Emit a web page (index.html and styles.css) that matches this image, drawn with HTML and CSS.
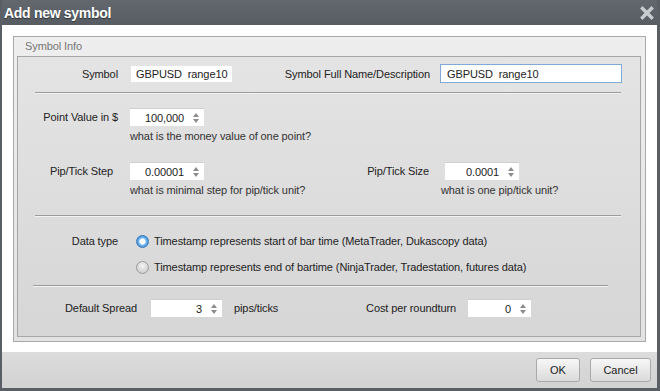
FILE: index.html
```html
<!DOCTYPE html>
<html lang="en">
<head>
    <meta charset="UTF-8">
    <title>Add new symbol</title>
    <link rel="stylesheet" href="styles.css">
</head>
<body>
    <div class="dialog">
        <div class="titlebar">
            <span class="title">Add new symbol</span>
            <svg class="close" width="14" height="14" viewBox="0 0 14 14">
                <path d="M2.5 2.5 L11.5 11.5 M11.5 2.5 L2.5 11.5" stroke="#c9ccce" stroke-width="3.4" stroke-linecap="square"/>
            </svg>
        </div>
        <div class="content">
            <div class="group">
                <div class="legend">Symbol Info</div>
                <div class="panel">
                    <div class="row first">
                        <span class="lbl w100">Symbol</span>
                        <input class="text short" type="text" value="GBPUSD  range10">
                        <span class="lbl w197">Symbol Full Name/Description</span>
                        <input class="text long" type="text" value="GBPUSD  range10">
                    </div>

                    <div class="sep"></div>

                    <div class="row point">
                        <span class="lbl w100">Point Value in $</span>
                        <div class="spin w74"><span>100,000</span><i class="arrows"></i></div>
                    </div>
                    <div class="hint pad112">what is the money value of one point?</div>

                    <div class="cols pip">
                        <div class="col left">
                            <div class="row">
                                <span class="lbl w95">Pip/Tick Step</span>
                                <div class="spin w74"><span>0.00001</span><i class="arrows"></i></div>
                            </div>
                            <div class="hint pad112">what is minimal step for pip/tick unit?</div>
                        </div>
                        <div class="col">
                            <div class="row">
                                <span class="lbl w99">Pip/Tick Size</span>
                                <div class="spin w74"><span>0.0001</span><i class="arrows"></i></div>
                            </div>
                            <div class="hint pad111">what is one pip/tick unit?</div>
                        </div>
                    </div>

                    <div class="sep sep2"></div>

                    <div class="radio-row r1">
                        <span class="lbl w100">Data type</span>
                        <span class="radio on"></span>
                        <span>Timestamp represents start of bar time (MetaTrader, Dukascopy data)</span>
                    </div>
                    <div class="radio-row r2">
                        <span class="lbl w100"></span>
                        <span class="radio"></span>
                        <span>Timestamp represents end of bartime (NinjaTrader, Tradestation, futures data)</span>
                    </div>

                    <div class="sep sep3"></div>

                    <div class="cols spread">
                        <div class="col left">
                            <div class="row">
                                <span class="lbl w119">Default Spread</span>
                                <div class="spin w71"><span>3</span><i class="arrows"></i></div>
                                <span class="unit">pips/ticks</span>
                            </div>
                        </div>
                        <div class="col">
                            <div class="row">
                                <span class="lbl w126">Cost per roundturn</span>
                                <div class="spin w63"><span>0</span><i class="arrows"></i></div>
                            </div>
                        </div>
                    </div>
                </div>
            </div>
        </div>
        <div class="footer">
            <button class="btn ok">OK</button>
            <button class="btn cancel">Cancel</button>
        </div>
    </div>
</body>
</html>
```

FILE: styles.css
```css
* {
    box-sizing: border-box;
}
body {
    font-family: "Liberation Sans", Arial, sans-serif;
    font-size: 11px;
    letter-spacing: -0.1px;
    color: #222;
    margin: 0;
    padding: 0;
}
.dialog {
    width: 660px;
    height: 391px;
    display: flex;
    flex-direction: column;
    background-color: #595f65;
    padding: 0 3px 3px 2px;
}
.titlebar {
    height: 25px;
    flex: none;
    display: flex;
    align-items: center;
    justify-content: space-between;
    padding: 0 3px 0 2px;
    background: linear-gradient(#62686e, #565c62);
}
.title {
    color: #fff;
    font-weight: bold;
    font-size: 14px;
    letter-spacing: -0.3px;
    text-shadow: 0 1px 1px #2a2e32;
}
.close {
    display: block;
}
.content {
    flex: none;
    height: 327px;
    background-color: #fff;
    padding: 11px 11px 10px 11px;
}
.group {
    height: 306px;
    display: flex;
    flex-direction: column;
    border: 1px solid #a9a9a9;
    background: linear-gradient(#eeeeee, #e2e2e2);
    padding: 0 4px 4px 3px;
}
.legend {
    height: 19px;
    line-height: 19px;
    padding-left: 8px;
    color: #767676;
}
.panel {
    flex: 1;
    border: 1px solid #a6a6a6;
    background: linear-gradient(#e4e4e4, #d6d6d6);
}
.row {
    display: flex;
    align-items: center;
    height: 18px;
}
.row.first {
    margin-top: 8px;
}
.lbl {
    flex: none;
    text-align: right;
    white-space: nowrap;
}
.w95 { width: 95px; margin-right: 17px; }
.w99 { width: 99px; margin-right: 16px; }
.w100 { width: 100px; margin-right: 12px; }
.w119 { width: 119px; margin-right: 14px; }
.w126 { width: 126px; margin-right: 12px; }
.w197 { width: 197px; margin-right: 10px; }

.text {
    font-family: "Liberation Sans", Arial, sans-serif;
    font-size: 11px;
    letter-spacing: -0.1px;
    color: #222;
    background-color: #fff;
    border: 1px solid #e4e4e4;
    padding: 0 0 0 5px;
    height: 18px;
    outline: none;
    white-space: pre;
}
.text.short {
    width: 103px;
}
.text.long {
    width: 182px;
    height: 19px;
    margin-top: -1px;
    border-color: #7fa9d6;
    padding-left: 6px;
}
.sep {
    height: 2px;
    border-top: 1px solid #9c9c9c;
    border-bottom: 1px solid #f2f2f2;
    margin: 9px 19px 0 17px;
}
.point {
    margin-top: 14px;
}
.spin {
    flex: none;
    height: 18px;
    background-color: #fff;
    border-top: 1px solid #cfcfcf;
    display: flex;
    align-items: center;
    justify-content: flex-end;
    padding-right: 5px;
}
.w74 { width: 74px; }
.w71 { width: 71px; }
.w63 { width: 63px; }
.arrows {
    width: 6px;
    height: 10px;
    margin-left: 9px;
    position: relative;
}
.arrows::before,
.arrows::after {
    content: "";
    position: absolute;
    left: 0;
    border-left: 3px solid transparent;
    border-right: 3px solid transparent;
}
.arrows::before {
    top: 0;
    border-bottom: 4px solid #8c8c8c;
}
.arrows::after {
    bottom: 0;
    border-top: 4px solid #8c8c8c;
}
.hint {
    line-height: 13px;
    margin-top: 4px;
    color: #333;
    white-space: nowrap;
}
.pad112 { padding-left: 112px; }
.pad111 { padding-left: 111px; }
.cols {
    display: flex;
}
.col.left {
    width: 312px;
    flex: none;
}
.pip {
    margin-top: 19px;
}
.sep2 {
    margin-top: 18px;
}
.radio-row {
    display: flex;
    align-items: center;
    height: 16px;
    white-space: nowrap;
}
.radio-row .w100 {
    margin-right: 18px;
}
.r1 {
    margin-top: 16px;
}
.r2 {
    margin-top: 10px;
}
.radio {
    flex: none;
    width: 13px;
    height: 13px;
    border-radius: 50%;
    margin-right: 5px;
    border: 1px solid #9a9a9a;
    background: radial-gradient(circle at 50% 35%, #f4f4f4, #c4c4c4);
}
.radio.on {
    border-color: #3b78b8;
    background: radial-gradient(circle, #ffffff 0, #ffffff 2.5px, #7fc0f5 3.5px, #3f8ad4 6px);
}
.sep3 {
    margin: 10px 32px 0 15px;
}
.spread {
    margin-top: 12px;
}
.unit {
    margin-left: 12px;
}
.footer {
    flex: 1;
    display: flex;
    justify-content: flex-end;
    align-items: center;
    gap: 10px;
    padding-right: 6px;
    background: linear-gradient(#dcdcdc, #d2d2d2);
}
.btn {
    height: 24px;
    border: 1px solid #a9a9a9;
    border-radius: 3px;
    background: linear-gradient(#f7f7f7, #dadada);
    font-family: "Liberation Sans", Arial, sans-serif;
    font-size: 11px;
    color: #222;
    padding: 0;
}
.btn.ok {
    width: 44px;
}
.btn.cancel {
    width: 61px;
}
```
